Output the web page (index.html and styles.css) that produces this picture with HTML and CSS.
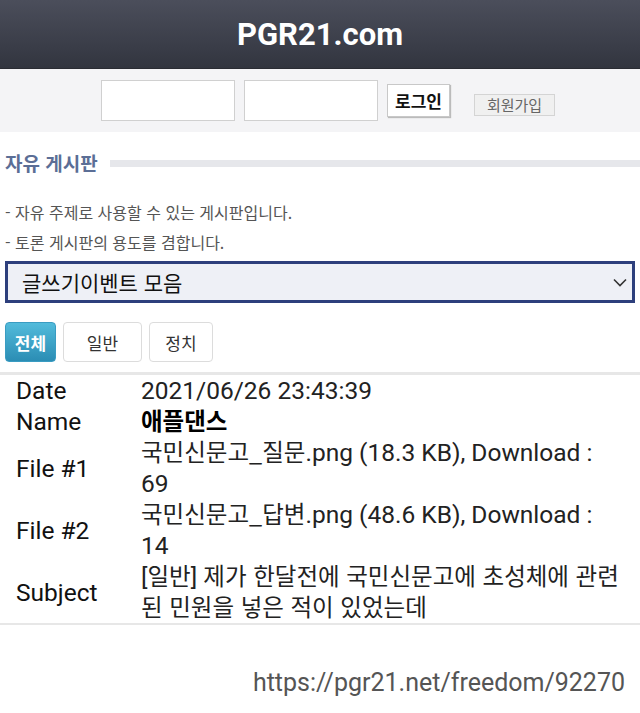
FILE: index.html
```html
<!DOCTYPE html>
<html lang="ko">
<head>
    <meta charset="UTF-8">
    <meta name="viewport" content="width=device-width, initial-scale=1.0">
    <title>PGR21.com</title>
    <link rel="stylesheet" href="styles.css">
</head>
<body>
    <div id="header">PGR21.com</div>

    <div id="login">
        <input type="text" class="loginbox">
        <input type="password" class="loginbox">
        <button id="loginbtn">로그인</button>
        <button id="joinbtn">회원가입</button>
    </div>

    <div class="boardtitle">
        <h2>자유 게시판</h2>
        <div class="titlebar"></div>
    </div>
    <p class="desc first">- 자유 주제로 사용할 수 있는 게시판입니다.</p>
    <p class="desc">- 토론 게시판의 용도를 겸합니다.</p>

    <div class="selectbox">
        <span>글쓰기이벤트 모음</span>
        <svg width="14" height="9" viewBox="0 0 14 9"><path d="M1 1.5 L7 7.5 L13 1.5" fill="none" stroke="#333" stroke-width="1.6"/></svg>
    </div>

    <div class="cats">
        <button class="cat active">전체</button>
        <button class="cat wide">일반</button>
        <button class="cat">정치</button>
    </div>

    <table id="info">
        <tr><td class="lbl">Date</td><td>2021/06/26 23:43:39</td></tr>
        <tr><td class="lbl">Name</td><td class="name"><span class="ko">애플댄스</span></td></tr>
        <tr><td class="lbl">File #1</td><td><span class="ko">국민신문고_질문</span>.png (18.3 KB), Download : 69</td></tr>
        <tr><td class="lbl">File #2</td><td><span class="ko">국민신문고_답변</span>.png (48.6 KB), Download : 14</td></tr>
        <tr><td class="lbl">Subject</td><td>[<span class="ko">일반</span>] <span class="ko">제가 한달전에 국민신문고에 초성체에 관련된 민원을 넣은 적이 있었는데</span></td></tr>
    </table>

    <div class="url">https://pgr21.net/freedom/92270</div>
</body>
</html>
```

FILE: styles.css
```css
* {
    box-sizing: border-box;
    margin: 0;
    padding: 0;
}

body {
    font-family: Roboto, "Noto Sans CJK KR", sans-serif;
    background: #fff;
    color: #222;
}

#header {
    height: 69px;
    background: linear-gradient(#4b4e5b, #32353f);
    color: #fff;
    font-size: 31px;
    font-weight: bold;
    text-align: center;
    line-height: 70px;
    border-bottom: 1px solid #2a2c33;
}

#login {
    height: 63px;
    background: #f4f4f6;
    display: flex;
    align-items: center;
    padding-left: 101px;
}
.loginbox {
    width: 134px;
    height: 41px;
    border: 1px solid #d0d0d0;
    background: #fff;
    margin-right: 9px;
}
#loginbtn {
    width: 63px;
    height: 33px;
    font-family: "Noto Sans CJK KR", sans-serif;
    font-size: 17px;
    font-weight: bold;
    color: #111;
    background: #fff;
    border: 1px solid #c8c8c8;
    box-shadow: 1px 1px 1px #bbb;
    margin-right: 24px;
}
#joinbtn {
    width: 81px;
    height: 22px;
    font-family: "Noto Sans CJK KR", sans-serif;
    font-size: 15px;
    line-height: 18px;
    color: #666;
    background: #f0f0f0;
    border: 1px solid #d4d4d4;
    margin-top: 8px;
}

.boardtitle {
    display: flex;
    align-items: center;
    padding: 18px 0 0 5px;
}
.boardtitle h2 {
    font-family: "Noto Sans CJK KR", sans-serif;
    font-size: 19px;
    font-weight: bold;
    color: #5b6e96;
    line-height: 26px;
}
.titlebar {
    flex: 1;
    height: 7px;
    background: #e6e7eb;
    margin-left: 12px;
    margin-top: 1px;
}

.desc {
    font-family: "Noto Sans CJK KR", sans-serif;
    font-size: 16px;
    color: #555;
    line-height: 20px;
    padding-left: 5px;
    margin-top: 10px;
}
.desc.first {
    margin-top: 26px;
}

.selectbox {
    margin: 9px 5px 0 5px;
    height: 42px;
    border: 3px solid #2d3f7c;
    background: #eef0f6;
    display: flex;
    align-items: center;
    justify-content: space-between;
    padding: 0 5px 0 14px;
}
.selectbox span {
    font-family: "Noto Sans CJK KR", sans-serif;
    font-size: 21px;
    color: #111;
}

.cats {
    display: flex;
    gap: 7px;
    padding: 19px 0 0 5px;
}
.cat {
    width: 64px;
    height: 40px;
    font-family: "Noto Sans CJK KR", sans-serif;
    font-size: 17px;
    color: #333;
    background: #fff;
    border: 1px solid #dcdcdc;
    border-radius: 4px;
}
.cat.wide {
    width: 79px;
}
.cat.active {
    width: 51px;
    color: #fff;
    font-weight: bold;
    background: linear-gradient(#52bbdb, #2b8db4);
    border-color: #3a9cc2;
}

#info {
    margin-top: 10px;
    width: 100%;
    border-collapse: collapse;
    border-top: 3px solid #e7e7e7;
    border-bottom: 2px solid #e7e7e7;
    font-size: 24.5px;
    line-height: 31px;
}
#info td {
    vertical-align: middle;
    padding: 0 20px 0 0;
    color: #222;
}
#info td.lbl {
    width: 141px;
    padding-left: 16px;
    color: #111;
}
#info td.name {
    font-weight: bold;
    color: #000;
}
#info .ko {
    font-family: "Noto Sans CJK KR", sans-serif;
    font-size: 23.5px;
    line-height: 20px;
}

.url {
    text-align: right;
    padding-right: 15px;
    margin-top: 44px;
    font-size: 25px;
    line-height: 28px;
    color: #555;
}
```
